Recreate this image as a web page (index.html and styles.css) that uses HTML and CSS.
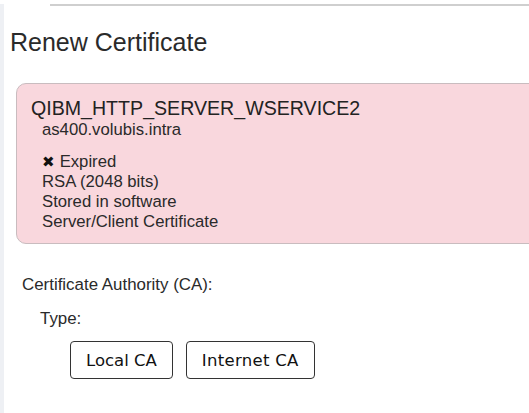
FILE: index.html
```html
<!DOCTYPE html>
<html>
<head>
<meta charset="utf-8">
<link rel="stylesheet" href="styles.css">
</head>
<body>
<div class="page">
  <div class="topline"></div>
  <h1 class="title">Renew Certificate</h1>
  <div class="card">
    <div class="card-name">QIBM_HTTP_SERVER_WSERVICE2</div>
    <div class="card-body">
      <div class="host">as400.volubis.intra</div>
      <div class="details">
        <div><span class="x">&#x2716;</span> Expired</div>
        <div>RSA (2048 bits)</div>
        <div>Stored in software</div>
        <div>Server/Client Certificate</div>
      </div>
    </div>
  </div>
  <div class="ca">
    <div class="ca-label">Certificate Authority (CA):</div>
    <div class="type">
      <div class="type-label">Type:</div>
      <div class="buttons">
        <button class="btn">Local CA</button>
        <button class="btn btn-wide">Internet CA</button>
      </div>
    </div>
  </div>
</div>
</body>
</html>
```
FILE: styles.css
```css
html, body {
  margin: 0;
  padding: 0;
  background: #fff;
}
body {
  font-family: "Liberation Sans", Arial, sans-serif;
  color: #333;
  width: 529px;
  height: 413px;
  overflow: hidden;
}
.page {
  border-left: 4px solid #eef0f4;
  min-height: 413px;
  box-sizing: border-box;
  padding-left: 6px;
}
.topline {
  margin-top: 4px;
  margin-left: 40px;
  border-top: 2px solid #cfcfcf;
}
.title {
  margin: 21px 0 0 0;
  font-size: 25px;
  font-weight: normal;
  line-height: 30px;
  color: #2a2a2a;
}
.card {
  margin: 26px -20px 0 6px;
  background: #f9d7dd;
  border: 1px solid #c9bcbf;
  border-radius: 10px;
  padding: 12px 14px 12px 14px;
  height: 161px;
  box-sizing: border-box;
}
.card-name {
  font-size: 19.6px;
  line-height: 24px;
  color: #222;
}
.card-body {
  padding-left: 11px;
  font-size: 16.7px;
  line-height: 20px;
  color: #2a2a2a;
}
.host {
  margin-bottom: 12px;
}
.x {
  font-size: 15px;
  color: #111;
}
.ca {
  margin-top: 30px;
  padding-left: 12px;
  font-size: 16.9px;
  color: #2a2a2a;
}
.ca-label {
  line-height: 22px;
}
.type {
  padding-left: 18px;
  margin-top: 12px;
}
.type-label {
  line-height: 22px;
}
.buttons {
  display: flex;
  gap: 13px;
  margin-top: 11px;
  padding-left: 30px;
}
.btn {
  font-family: "DejaVu Sans", Verdana, sans-serif;
  font-size: 16.5px;
  color: #111;
  background: #fff;
  border: 1px solid #333;
  border-radius: 4px;
  height: 38px;
  padding: 0 15px;
}
.btn-wide {
  letter-spacing: 0.3px;
}
```
